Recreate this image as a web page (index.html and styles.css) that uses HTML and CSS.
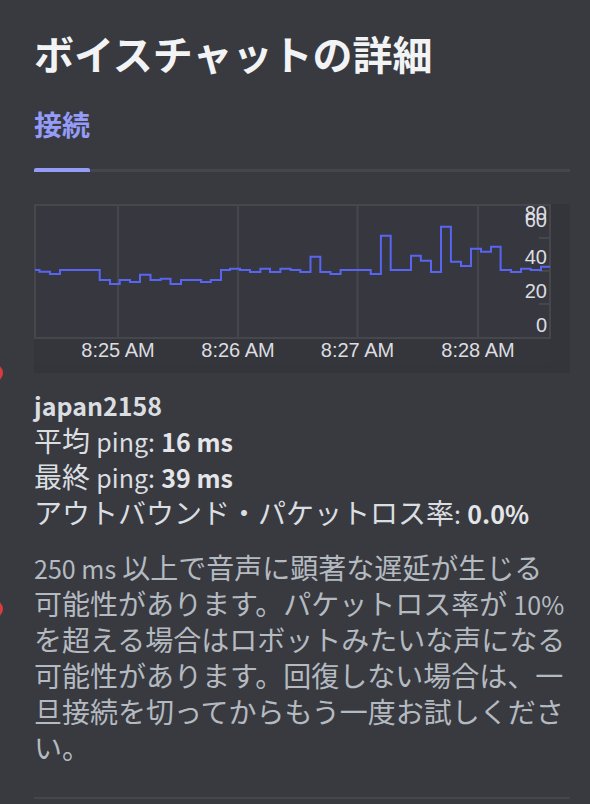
FILE: index.html
```html
<!DOCTYPE html>
<html lang="ja">
<head>
<meta charset="utf-8">
<title>ボイスチャットの詳細</title>
<link rel="stylesheet" href="styles.css">
</head>
<body>
<span class="edge-badge edge-badge-top"></span>
<span class="edge-badge edge-badge-bottom"></span>
<main class="panel">
  <h1 class="title">ボイスチャットの詳細</h1>
  <nav class="tabs">
    <div class="tab is-active">
      <span class="tab-label">接続</span>
      <span class="tab-indicator"></span>
    </div>
  </nav>
  <div class="chart">
    <svg class="chart-svg" width="536" height="169" viewBox="0 0 536 169" xmlns="http://www.w3.org/2000/svg">
      <rect x="0" y="0" width="536" height="169" fill="#34353b"/>
      <rect x="0" y="134" width="516" height="25" fill="#35363c"/>
      <rect x="1" y="1" width="515" height="133" fill="#37383f" stroke="#46474d" stroke-width="2"/>
      <g stroke="#46474d" stroke-width="2">
        <line x1="84" y1="1" x2="84" y2="134"/>
        <line x1="204" y1="1" x2="204" y2="134"/>
        <line x1="323.5" y1="1" x2="323.5" y2="134"/>
        <line x1="444" y1="1" x2="444" y2="134"/>
        <line x1="505" y1="34" x2="516" y2="34"/>
        <line x1="505" y1="67" x2="516" y2="67"/>
        <line x1="505" y1="100" x2="516" y2="100"/>
      </g>
      <path fill="none" stroke="#5865f2" stroke-width="2" stroke-linejoin="miter"
        d="M1 66 H5.5 V67.7 H16 V70 H26 V66 H65.7 V76 H76 V80 H85.7 V76 H96 V78 H106 V70.7 H116.5 V76 H126.7 V74.7 H136.5 V80 H147 V76 H167 V78 H176.8 V76 H187 V66 H196 V64.7 H206 V66 H216 V68 H226.4 V64.7 H236 V68 H246.4 V64.7 H256.6 V66 H266.3 V68 H276.5 V52.7 H286.3 V68 H296.5 V70 H306.6 V66 H336.7 V70 H346.9 V31.7 H356.7 V66 H377 V51.7 H386.8 V56.7 H397 V68 H407 V22.7 H416.9 V57.7 H427 V62 H437 V44.7 H447 V47.7 H457 V42.7 H466.6 V66 H477 V68 H487 V64.7 H496.7 V66 H507 V62.7 H516"/>
      <g class="axis-text" text-anchor="end">
        <text x="513" y="16">80</text>
        <text x="513" y="23">60</text>
        <text x="513" y="60">40</text>
        <text x="513" y="94">20</text>
        <text x="513" y="128">0</text>
      </g>
      <g class="axis-text" text-anchor="middle">
        <text x="84" y="153">8:25 AM</text>
        <text x="204" y="153">8:26 AM</text>
        <text x="323.5" y="153">8:27 AM</text>
        <text x="444" y="153">8:28 AM</text>
      </g>
    </svg>
  </div>
  <div class="stats">
    <div class="stat-user"><span class="latin">japan2158</span></div>
    <div class="stat-row">平均 <span class="latin">ping:</span> <strong class="latin">16 ms</strong></div>
    <div class="stat-row">最終 <span class="latin">ping:</span> <strong class="latin">39 ms</strong></div>
    <div class="stat-row">アウトバウンド・パケットロス率<span class="latin">:</span> <strong class="latin">0.0%</strong></div>
  </div>
  <p class="note"><span class="latin">250 ms</span> 以上で音声に顕著な遅延が生じる可能性があります。パケットロス率が <span class="latin">10%</span> を超える場合はロボットみたいな声になる可能性があります。回復しない場合は、一旦接続を切ってからもう一度お試しください。</p>
  <hr class="divider">
</main>
</body>
</html>
```
FILE: styles.css
```css
html, body {
  margin: 0;
  height: 100%;
  background: #383a40;
  overflow: hidden;
}

body {
  position: relative;
  font-family: "Noto Sans CJK JP", "Noto Sans", sans-serif;
  color: #dbdee1;
}

.edge-badge {
  position: absolute;
  left: -15px;
  width: 18px;
  height: 18px;
  border-radius: 50%;
  background: #d83c3e;
}

.edge-badge-top {
  top: 364px;
}

.edge-badge-bottom {
  top: 600px;
}

.panel {
  padding: 29px 20px 0 34px;
}

.title {
  margin: 0;
  font-size: 40px;
  line-height: 48px;
  font-weight: 700;
  color: #f2f3f5;
}

.tabs {
  margin-top: 31px;
  display: flex;
  background: linear-gradient(#45464c, #45464c) left bottom / 100% 3px no-repeat;
}

.tab {
  display: flex;
  flex-direction: column;
}

.tab-label {
  font-size: 28px;
  line-height: 32px;
  font-weight: 700;
  color: #949cf7;
  padding-bottom: 28px;
}

.tab-indicator {
  height: 4px;
  border-radius: 2px 2px 0 0;
  background: #949cf7;
}

.chart {
  margin-top: 32px;
  height: 169px;
}

.chart-svg {
  display: block;
}

.axis-text {
  font-family: "Liberation Sans", Arial, sans-serif;
  font-size: 20px;
  fill: #dcdde0;
}

.latin {
  font-size: 25px;
  line-height: 1;
}

.stats {
  margin-top: 13px;
  font-size: 28px;
  line-height: 36px;
  color: #dbdee1;
}

.stat-user {
  font-weight: 700;
}

.stat-row strong {
  font-weight: 700;
  color: #e3e5e8;
}

.note {
  margin: 19px 3px 0 0;
  font-size: 28px;
  line-height: 36px;
  color: #b5bac1;
}

.divider {
  margin: 32px 0 0;
  border: 0;
  height: 2px;
  background: #45464c;
}
```
